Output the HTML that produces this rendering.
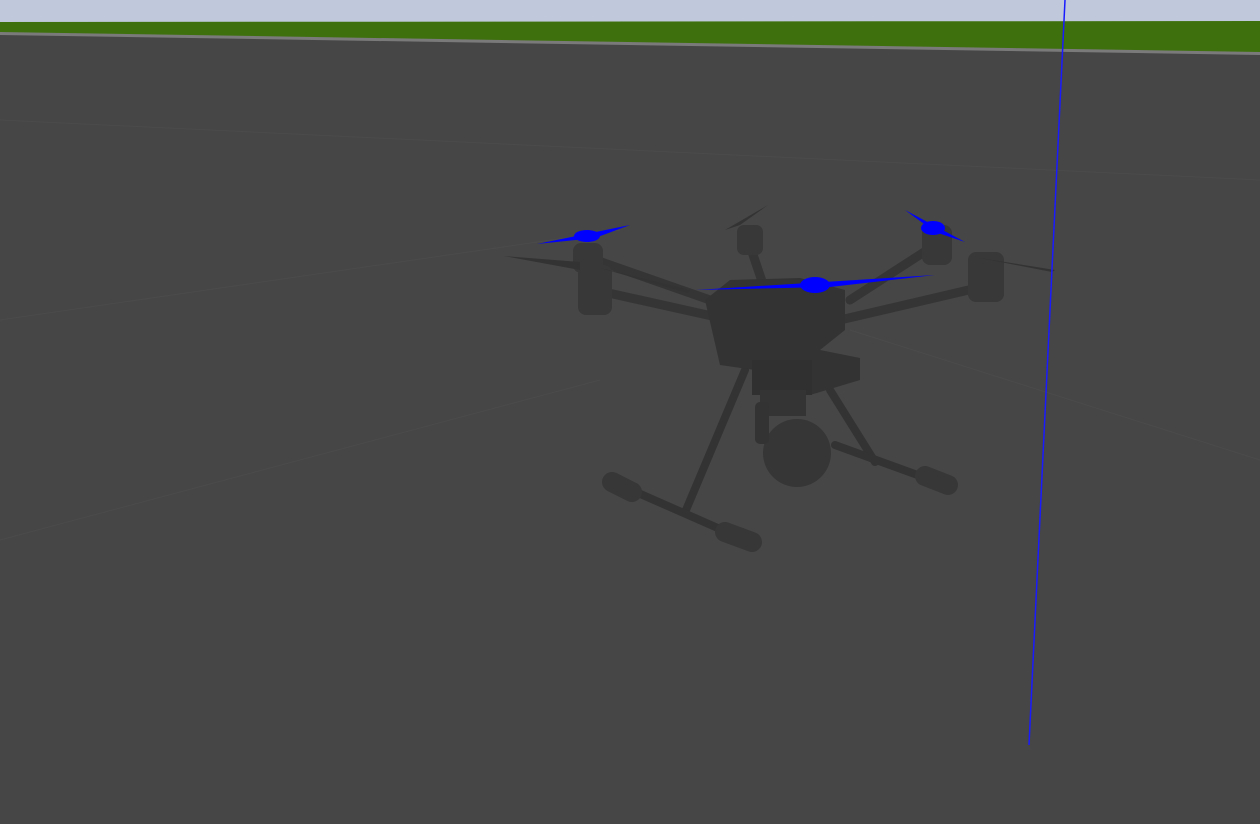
<!DOCTYPE html>
<html><head><style>html,body{margin:0;padding:0;background:#454545;overflow:hidden}svg{display:block}</style></head>
<body>
<svg width="1260" height="824" viewBox="0 0 1260 824" xmlns="http://www.w3.org/2000/svg">
<rect width="1260" height="824" fill="#464646"/>
<rect width="1260" height="22" fill="#bfc9db"/>
<polygon points="0,22 1260,21 1260,54 0,33" fill="#3e700d"/>
<polygon points="0,32 1260,52 1260,55 0,35" fill="#7a7a7a"/>
<g stroke="#4b4b4b" stroke-width="1" fill="none">
<line x1="0" y1="120" x2="1260" y2="180"/>
<line x1="0" y1="320" x2="620" y2="230"/>
<line x1="0" y1="540" x2="600" y2="380"/>
<line x1="850" y1="330" x2="1260" y2="460"/>
</g>
<g stroke-linecap="round" fill="none">
<g stroke="#333" stroke-width="8">
<line x1="745" y1="370" x2="686" y2="510"/>
<line x1="830" y1="390" x2="875" y2="462"/>
<line x1="620" y1="485" x2="745" y2="540"/>
<line x1="835" y1="445" x2="945" y2="485"/>
</g>
<g stroke="#373737" stroke-width="20">
<line x1="612" y1="482" x2="632" y2="492"/>
<line x1="725" y1="532" x2="752" y2="542"/>
<line x1="925" y1="476" x2="948" y2="485"/>
</g>
<g stroke="#353535" stroke-width="9">
<line x1="595" y1="290" x2="730" y2="320"/>
<line x1="590" y1="258" x2="710" y2="300"/>
<line x1="748" y1="240" x2="765" y2="290"/>
<line x1="935" y1="245" x2="850" y2="300"/>
<line x1="990" y1="285" x2="840" y2="320"/>
</g>
</g>
<g fill="#383838">
<rect x="573" y="243" width="30" height="30" rx="8"/>
<rect x="578" y="265" width="34" height="50" rx="8"/>
<rect x="737" y="225" width="26" height="30" rx="7"/>
<rect x="922" y="225" width="30" height="40" rx="8"/>
<rect x="968" y="252" width="36" height="50" rx="8"/>
<rect x="800" y="290" width="36" height="50" rx="8"/>
</g>
<path d="M705,300 L730,280 L800,278 L845,290 L845,330 L820,350 L860,358 L860,380 L810,395 L765,392 L755,370 L720,365 Z" fill="#333"/>
<rect x="752" y="360" width="60" height="35" fill="#303030"/>
<rect x="760" y="390" width="46" height="26" fill="#343434"/>
<circle cx="797" cy="453" r="34" fill="#363636"/>
<rect x="755" y="402" width="14" height="42" rx="5" fill="#333"/>
<g fill="#333">
<polygon points="504,256 580,262 580,270"/>
<polygon points="600,268 690,290 688,293"/>
<polygon points="980,258 1055,270 1052,272"/>
<polygon points="725,230 768,205 740,225"/>
</g>
<g fill="#0000ff">
<polygon points="537,244 630,225 595,238"/>
<ellipse cx="587" cy="236" rx="13" ry="6"/>
<polygon points="905,210 965,242 935,232"/>
<ellipse cx="933" cy="228" rx="12" ry="7"/>
<polygon points="696,290 935,275 830,287"/>
<ellipse cx="815" cy="285" rx="15" ry="8"/>
</g>
<line x1="1065" y1="0" x2="1029" y2="745" stroke="#1a1aff" stroke-width="1.5"/>
</svg>
</body></html>
